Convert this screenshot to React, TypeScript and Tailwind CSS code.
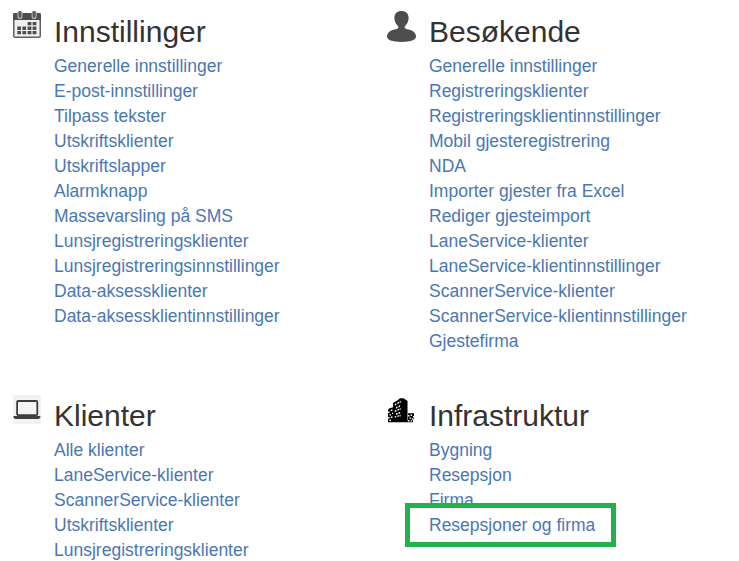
import type { ReactNode } from "react";

function CalendarIcon() {
  return (
    <svg width="28" height="28" viewBox="0 0 28 28">
      <rect x="0.75" y="3" width="26.5" height="23.2" rx="1.3" fill="#efefef" stroke="#606060" strokeWidth="1.5" />
      <path d="M0 3.5Q0 2 1.5 2H26.5Q28 2 28 3.5V9H0Z" fill="#4d4d4d" />
      <path d="M4.4 1h5v4.4a2.5 2.5 0 0 1-5 0ZM18.6 1h5v4.4a2.5 2.5 0 0 1-5 0Z" fill="#c4c4c4" />
      <path d="M5.3 1.3a1.6 1.6 0 0 1 3.2 0v4a1.6 1.6 0 0 1-3.2 0ZM19.5 1.3a1.6 1.6 0 0 1 3.2 0v4a1.6 1.6 0 0 1-3.2 0Z" fill="#5c5c5c" />
      <path
        d="M14.6 11h3.8v3.3h-3.8zM19.6 11h3.8v3.3h-3.8zM4.3 15.6h3.7v3.3H4.3zM9.4 15.6h3.7v3.3H9.4zM14.6 15.6h3.8v3.3h-3.8zM19.6 15.6h3.8v3.3h-3.8zM4.3 20h3.7v3.3H4.3zM9.4 20h3.7v3.3H9.4zM14.6 20h3.8v3.3h-3.8zM19.6 20h3.8v3.3h-3.8z"
        fill="#4d4d4d"
      />
    </svg>
  );
}

function UserIcon() {
  return (
    <svg width="29" height="31" viewBox="0 0 29 31" className="-ml-px">
      <path
        d="M14.5 0C18.8 0 21.6 2.7 21.6 6.8C21.6 10 20.6 12.4 18.3 14.8C17.5 15.7 17.3 17 18.4 17.6C20.3 18.7 23 18.7 25.2 19.8C28 21.2 29 23.5 29 25.6C29 29 24 30.9 14.5 30.9S0 29 0 25.6C0 23.5 1 21.2 3.8 19.8C6 18.7 8.7 18.7 10.6 17.6C11.7 17 11.5 15.7 10.7 14.8C8.4 12.4 7.4 10 7.4 6.8C7.4 2.7 10.2 0 14.5 0Z"
        fill="#4d4d4d"
      />
    </svg>
  );
}

function LaptopIcon() {
  return (
    <svg width="28" height="29" viewBox="0 0 28 29">
      <rect width="28" height="29" fill="#f2f2f2" />
      <rect x="4.1" y="6" width="20.2" height="14.2" rx="1.2" fill="#f1f4f3" stroke="#3c3c3c" strokeWidth="1.8" />
      <path d="M0.5 21H27.3V22.4L25.8 24H2L0.5 22.4Z" fill="#404040" />
    </svg>
  );
}

function BuildingIcon() {
  return (
    <svg width="28" height="26" viewBox="0 0 28 26">
      <path d="M0 24V12.2L1 10.6L5 9.2V5L10 2L12 0.2H15.4L18.6 2.2L19.5 3V22.4H20V15.2H26V20.4L25 21.6V24.2H0Z" fill="#000" />
      <path
        d="M6.8 6l1.5-.8v1.7l-1.5.7zM9.4 4.6l1.5-.8v1.7l-1.5.7zM11.6 3.4l1.2-.6v1.6l-1.2.6zM8 9.1l1.5-.7v1.7l-1.5.6zM10.6 7.8l1.5-.7v1.7l-1.5.6zM6.8 12.3l1.5-.5v1.6l-1.5.5zM9.4 11.2l1.5-.5v1.6l-1.5.5zM11.6 10.5l1-.4v1.6l-1 .4zM8 15.2l1.5-.4v1.6l-1.5.4zM10.6 14.3l1.5-.4v1.6l-1.5.4zM6.8 18.3l1.5-.3v1.6H6.8zM9.4 17.5l1.5-.3v1.6H9.4zM11.6 17l1-.2v1.6h-1zM0 13.6h1.6v1.5H0zM2.8 11.7l1.6-.4v1.5l-1.6.4zM1.4 16.2l1.5-.3v1.5H1.4zM4 14.7l1-.2V16H4zM0 19h1.6v1.5H0zM2.8 18.6h1.6v1.5H2.8zM1.4 21.6h1.5v1.3H1.4zM20 17h1.4v1.4H20zM22.6 16.6h1.5V18h-1.5zM25 18h1v1.4h-1zM21.4 19.4h1.5v1.4h-1.5zM23.7 20h1.4v1.4h-1.4zM20 22h1.4v1.4H20zM22.6 22.2h1.5v1.3h-1.5z"
        fill="#fff"
      />
    </svg>
  );
}

type SectionProps = { icon: ReactNode; title: string; links: string[]; highlight?: string };

function Section({ icon, title, links, highlight }: SectionProps) {
  return (
    <section className="flex h-96 items-start">
      <div className="w-[41px] shrink-0">{icon}</div>
      <div>
        <h2 className="mt-1 text-[30px] leading-[33px] whitespace-nowrap text-[#333]">{title}</h2>
        <ul className="mt-[6px] text-[17.5px] leading-[25px] whitespace-nowrap text-[#4a77b4]">
          {links.map((link) => (
            <li key={link} className="relative">
              <a href="#">{link}</a>
              {link === highlight && (
                <span className="absolute -top-[10px] -left-[24px] h-[44px] w-[211px] border-[5px] border-[#22b14c]" />
              )}
            </li>
          ))}
        </ul>
      </div>
    </section>
  );
}

export default function App() {
  return (
    <main className="grid h-[561px] grid-cols-[375px_1fr] content-start overflow-hidden bg-white pt-[11px] pl-[13px] font-['Liberation_Sans',Arial,sans-serif]">
      <Section
        icon={<CalendarIcon />}
        title="Innstillinger"
        links={[
          "Generelle innstillinger",
          "E-post-innstillinger",
          "Tilpass tekster",
          "Utskriftsklienter",
          "Utskriftslapper",
          "Alarmknapp",
          "Massevarsling på SMS",
          "Lunsjregistreringsklienter",
          "Lunsjregistreringsinnstillinger",
          "Data-aksessklienter",
          "Data-aksessklientinnstillinger",
        ]}
      />
      <Section
        icon={<UserIcon />}
        title="Besøkende"
        links={[
          "Generelle innstillinger",
          "Registreringsklienter",
          "Registreringsklientinnstillinger",
          "Mobil gjesteregistrering",
          "NDA",
          "Importer gjester fra Excel",
          "Rediger gjesteimport",
          "LaneService-klienter",
          "LaneService-klientinnstillinger",
          "ScannerService-klienter",
          "ScannerService-klientinnstillinger",
          "Gjestefirma",
        ]}
      />
      <Section
        icon={<LaptopIcon />}
        title="Klienter"
        links={[
          "Alle klienter",
          "LaneService-klienter",
          "ScannerService-klienter",
          "Utskriftsklienter",
          "Lunsjregistreringsklienter",
        ]}
      />
      <Section
        icon={<div className="pt-[3px]"><BuildingIcon /></div>}
        title="Infrastruktur"
        links={["Bygning", "Resepsjon", "Firma", "Resepsjoner og firma"]}
        highlight="Resepsjoner og firma"
      />
    </main>
  );
}
